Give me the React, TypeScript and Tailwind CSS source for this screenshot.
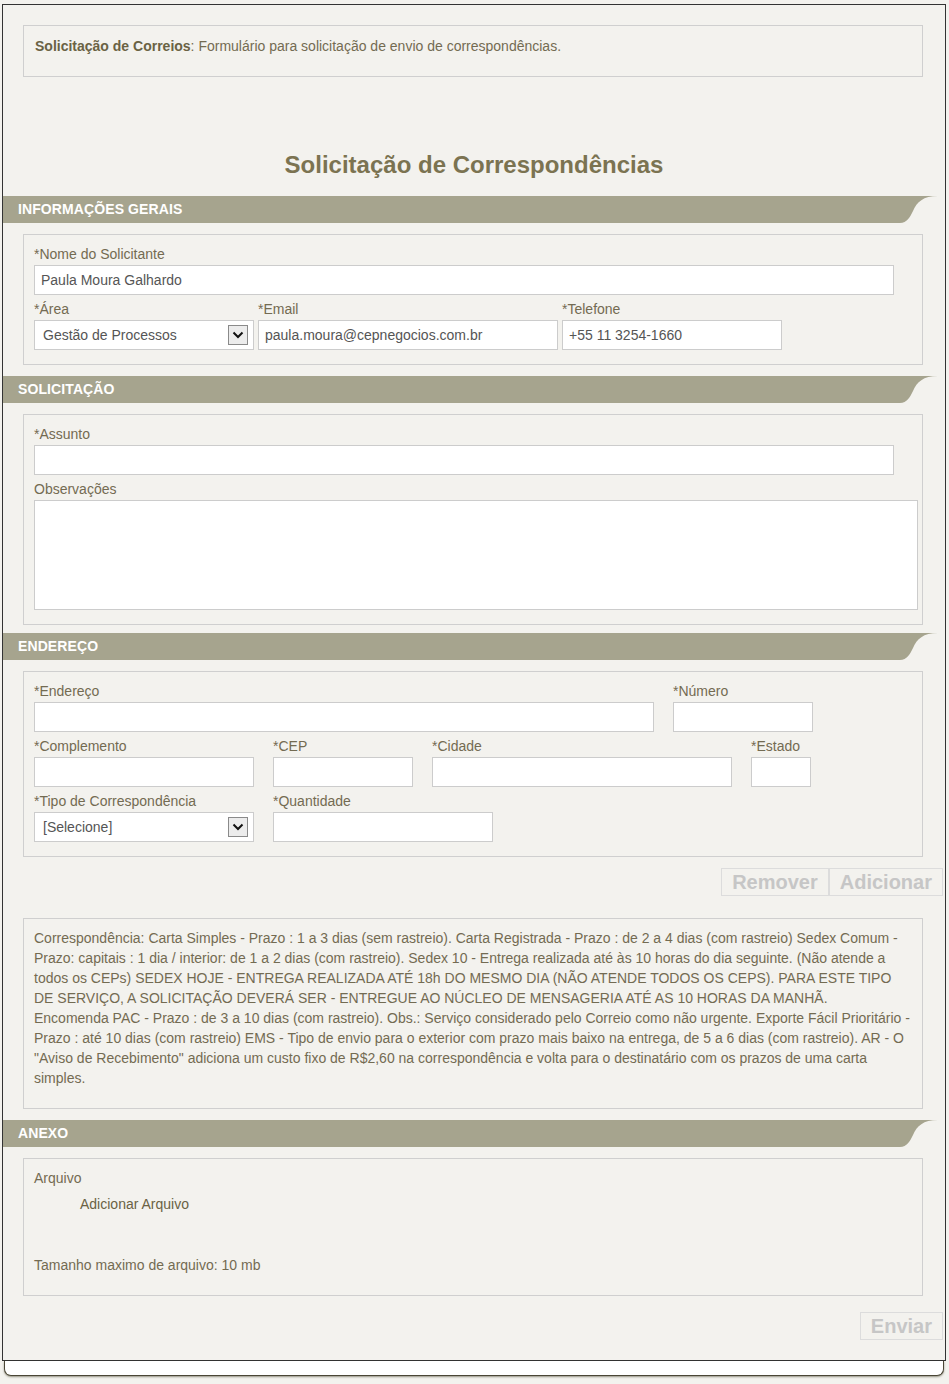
const labelCls = 'block text-[14px] leading-[16px] text-[#736b52] mb-[3px]';
const inputCls =
    'block h-[30px] bg-white border border-[#cccccc] px-[6px] text-[14px] text-[#555555] outline-none font-["Liberation_Sans",Arial,sans-serif]';

const SectionBar = ({ title }: { title: string }) => (
    <div className="flex h-[27px] mr-[7px]">
        <div className="flex-1 bg-[#a6a48e] flex items-center pl-[15px] text-white font-bold text-[14px] tracking-[0.1px]">
            {title}
        </div>
        <svg width="38" height="27" viewBox="0 0 38 27" className="block shrink-0">
            <path d="M0 27 C7 27 10 21 13 15 C17 6 23 0 38 0 L0 0 Z" fill="#a6a48e" />
        </svg>
    </div>
);

const Field = ({ label, width, value = '' }: { label: string; width: number; value?: string }) => (
    <div style={{ width }}>
        <label className={labelCls}>{label}</label>
        <input readOnly value={value} className={inputCls + ' w-full'} />
    </div>
);

const SelectBox = ({ label, value }: { label: string; value: string }) => (
    <div className="w-[220px]">
        <label className={labelCls}>{label}</label>
        <div className="h-[30px] bg-white border border-[#cccccc] flex items-center justify-between pl-[8px] pr-[5px]">
            <span className="text-[14px] text-[#555555]">{value}</span>
            <div className="w-[20px] h-[20px] border border-[#8a8a8a] bg-[#ececec] flex items-center justify-center">
                <svg width="12" height="8" viewBox="0 0 12 8">
                    <path d="M1.5 1.5 L6 6 L10.5 1.5" fill="none" stroke="#111" strokeWidth="2" />
                </svg>
            </div>
        </div>
    </div>
);

const GreyButton = ({ children }: { children: string }) => (
    <div className="h-[28px] border border-[#dcdcdc] px-[10px] flex items-center text-[20px] font-bold text-[#c6c6c6] leading-none">
        {children}
    </div>
);

// Linhas do texto como aparecem na tela original
const descricaoLinhas = [
    'Correspondência: Carta Simples - Prazo : 1 a 3 dias (sem rastreio). Carta Registrada - Prazo : de 2 a 4 dias (com rastreio) Sedex Comum -',
    'Prazo: capitais : 1 dia / interior: de 1 a 2 dias (com rastreio). Sedex 10 - Entrega realizada até às 10 horas do dia seguinte. (Não atende a',
    'todos os CEPs) SEDEX HOJE - ENTREGA REALIZADA ATÉ 18h DO MESMO DIA (NÃO ATENDE TODOS OS CEPS). PARA ESTE TIPO',
    'DE SERVIÇO, A SOLICITAÇÃO DEVERÁ SER - ENTREGUE AO NÚCLEO DE MENSAGERIA ATÉ AS 10 HORAS DA MANHÃ.',
    'Encomenda PAC - Prazo : de 3 a 10 dias (com rastreio). Obs.: Serviço considerado pelo Correio como não urgente. Exporte Fácil Prioritário -',
    'Prazo : até 10 dias (com rastreio) EMS - Tipo de envio para o exterior com prazo mais baixo na entrega, de 5 a 6 dias (com rastreio). AR - O',
    '"Aviso de Recebimento" adiciona um custo fixo de R$2,60 na correspondência e volta para o destinatário com os prazos de uma carta',
    'simples.',
];

export default function App() {
    return (
        <div className="min-h-[1384px] bg-[#f3f2ee] pt-[4px] font-['Liberation_Sans',Arial,sans-serif]">
            <div className="ml-[2px] w-[944px] border border-[#333333] bg-[#f3f2ee] pt-[20px] pb-[20px]">
                {/* Intro */}
                <div className="ml-[20px] w-[900px] border border-[#cfcfcf] pl-[11px] pt-[12px] pb-[22px] text-[14px] leading-[16px] text-[#736b52]">
                    <span className="font-bold text-[#6a6244]">Solicitação de Correios</span>: Formulário para solicitação de envio de correspondências.
                </div>

                <h1 className="mt-[74px] text-center text-[24px] leading-[28px] font-bold text-[#7b7351]">
                    Solicitação de Correspondências
                </h1>

                {/* Informações gerais */}
                <div className="mt-[17px]">
                    <SectionBar title="INFORMAÇÕES GERAIS" />
                </div>
                <div className="mt-[11px] ml-[20px] w-[900px] border border-[#cfcfcf] pl-[10px] pr-[4px] pt-[11px] pb-[14px]">
                    <Field label="*Nome do Solicitante" width={860} value="Paula Moura Galhardo" />
                    <div className="flex gap-[4px] mt-[6px]">
                        <SelectBox label="*Área" value="Gestão de Processos" />
                        <Field label="*Email" width={300} value="paula.moura@cepnegocios.com.br" />
                        <Field label="*Telefone" width={220} value="+55 11 3254-1660" />
                    </div>
                </div>

                {/* Solicitação */}
                <div className="mt-[11px]">
                    <SectionBar title="SOLICITAÇÃO" />
                </div>
                <div className="mt-[11px] ml-[20px] w-[900px] border border-[#cfcfcf] pl-[10px] pr-[4px] pt-[11px] pb-[14px]">
                    <Field label="*Assunto" width={860} />
                    <div className="mt-[6px]">
                        <label className={labelCls}>Observações</label>
                        <textarea readOnly className="block w-[884px] h-[110px] bg-white border border-[#cccccc] resize-none outline-none" />
                    </div>
                </div>

                {/* Endereço */}
                <div className="mt-[8px]">
                    <SectionBar title="ENDEREÇO" />
                </div>
                <div className="mt-[11px] ml-[20px] w-[900px] border border-[#cfcfcf] pl-[10px] pr-[4px] pt-[11px] pb-[14px]">
                    <div className="flex gap-[19px]">
                        <Field label="*Endereço" width={620} />
                        <Field label="*Número" width={140} />
                    </div>
                    <div className="flex gap-[19px] mt-[6px]">
                        <Field label="*Complemento" width={220} />
                        <Field label="*CEP" width={140} />
                        <Field label="*Cidade" width={300} />
                        <Field label="*Estado" width={60} />
                    </div>
                    <div className="flex gap-[19px] mt-[6px]">
                        <SelectBox label="*Tipo de Correspondência" value="[Selecione]" />
                        <Field label="*Quantidade" width={220} />
                    </div>
                </div>

                <div className="mt-[11px] flex justify-end mr-[2px]">
                    <GreyButton>Remover</GreyButton>
                    <GreyButton>Adicionar</GreyButton>
                </div>

                {/* Descrição */}
                <div className="mt-[22px] ml-[20px] w-[900px] border border-[#cfcfcf] pl-[10px] pt-[9px] pb-[20px] text-[14px] leading-[20px] text-[#736b52] whitespace-nowrap">
                    {descricaoLinhas.map((linha, i) => (
                        <div key={i}>{linha}</div>
                    ))}
                </div>

                {/* Anexo */}
                <div className="mt-[11px]">
                    <SectionBar title="ANEXO" />
                </div>
                <div className="mt-[11px] ml-[20px] w-[900px] border border-[#cfcfcf] pl-[10px] pt-[11px] pb-[22px] text-[14px] leading-[16px] text-[#736b52]">
                    <div>Arquivo</div>
                    <div className="mt-[10px] ml-[46px] text-[#6a6244]">Adicionar Arquivo</div>
                    <div className="mt-[45px]">Tamanho maximo de arquivo: 10 mb</div>
                </div>

                <div className="mt-[16px] flex justify-end mr-[2px]">
                    <GreyButton>Enviar</GreyButton>
                </div>
            </div>
            {/* Footer */}
            <div className="ml-[4px] w-[940px] h-[15px] bg-white border border-t-0 border-[#4a4636] rounded-b-[7px] shadow-[0_1px_2px_rgba(60,55,30,0.5)]" />
        </div>
    );
}
